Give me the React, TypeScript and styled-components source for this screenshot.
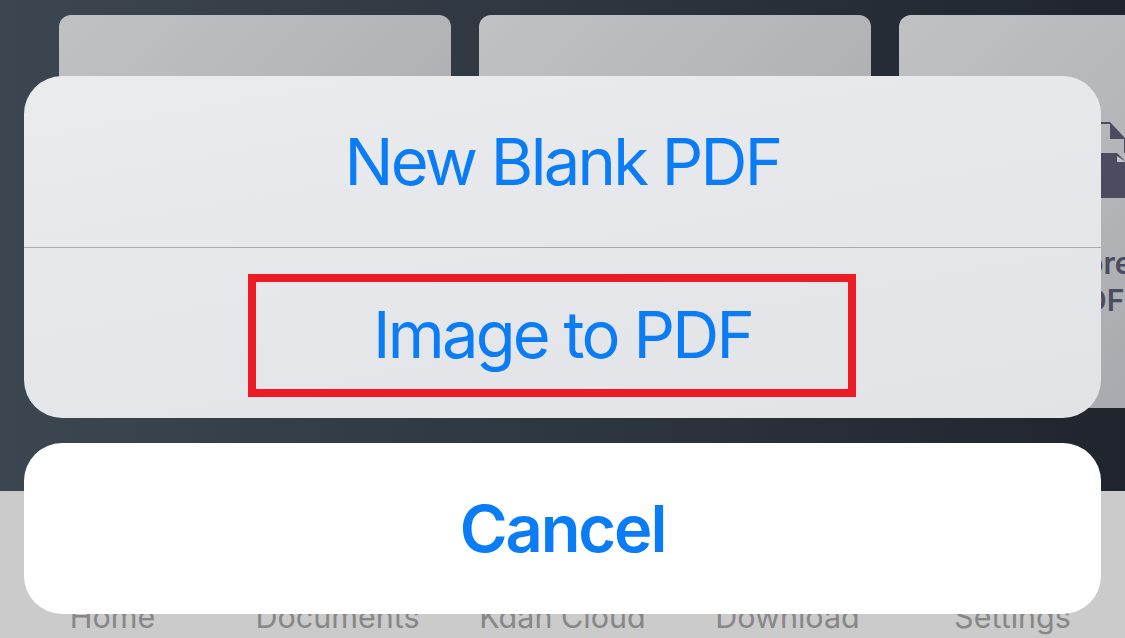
import React, { FunctionComponent } from 'react';
import styled, { createGlobalStyle } from 'styled-components';

const GlobalStyle = createGlobalStyle`
  html, body {
    margin: 0;
    padding: 0;
    background: #21262e;
  }
`;

const Screen = styled("div")`
  position: relative;
  width: 1125px;
  height: 638px;
  overflow: hidden;
  display: flex;
  flex-direction: column;
  font-family: Inter, "Liberation Sans", sans-serif;
  background: linear-gradient(90deg, #3c4651 0%, #2e3640 50%, #20252d 100%);
`;

const CardRow = styled("div")`
  flex: 1;
  display: flex;
  gap: 28px;
  padding: 15px 0 0 59px;
`;

const Card = styled("div")`
  flex: 0 0 392px;
  height: 393px;
  box-sizing: border-box;
  padding-top: 105px;
  border-radius: 12px;
  display: flex;
  flex-direction: column;
  align-items: center;
  background: linear-gradient(135deg, #c0c1c3 0%, #b2b4b7 50%, #a0a2a9 100%);
`;

const CardLabel = styled("div")`
  margin-top: 47px;
  color: #4b4b62;
  font-size: 30px;
  font-weight: 600;
  line-height: 37px;
  text-align: center;
`;

const TabBar = styled("div")`
  flex: 0 0 147px;
  box-sizing: border-box;
  display: grid;
  grid-template-columns: repeat(5, 1fr);
  align-items: end;
  padding-bottom: 3px;
  background: #cbcbcb;
`;

const TabLabel = styled("div")`
  color: #878787;
  font-size: 30.5px;
  line-height: 36px;
  text-align: center;
`;

const Overlay = styled("div")`
  position: absolute;
  left: 24px;
  right: 24px;
  bottom: 24px;
  display: flex;
  flex-direction: column;
  gap: 25px;
`;

const ActionGroup = styled("div")`
  border-radius: 38px;
  overflow: hidden;
  background: linear-gradient(170deg, #eaebed 0%, #e1e3e7 100%);
`;

const ActionRow = styled("div")<{ $divided?: boolean }>`
  height: ${(p) => (p.$divided ? "172px" : "170px")};
  box-sizing: border-box;
  display: flex;
  align-items: center;
  justify-content: center;
  color: #0a7cf5;
  font-size: 65px;
  letter-spacing: -2.7px;
  border-bottom: ${(p) => (p.$divided ? "1px solid #a9abae" : "none")};
`;

const Highlight = styled("div")`
  width: 608px;
  height: 123px;
  margin: 5px 22px 0 0;
  padding: 0 0 2px 22px;
  box-sizing: border-box;
  display: flex;
  align-items: center;
  justify-content: center;
  border: 8px solid #ed1c24;
`;

const CancelButton = styled("div")`
  height: 171px;
  display: flex;
  align-items: center;
  justify-content: center;
  border-radius: 38px;
  background: #ffffff;
  color: #0a7cf5;
  font-size: 65px;
  font-weight: 600;
  letter-spacing: -2.1px;
`;

const DocIcon: FunctionComponent = () => (
  <svg width="64" height="78" viewBox="0 0 64 78">
    <path
      fill="#4b4b62"
      d="M14 2 H47 L64 20 V33 H61 V19 H47 V4 H14 Z"
    />
    <path fill="#4b4b62" d="M4 33 H54 L64 43 V78 H4 Z" />
    <path fill="#c2c3c7" d="M54 36 V42 H63 Z" />
  </svg>
);

const tabs = ["Home", "Documents", "Kdan Cloud", "Download", "Settings"];

export default function App() {
  return (
    <Screen>
      <GlobalStyle />
      <CardRow>
        <Card />
        <Card />
        <Card>
          <DocIcon />
          <CardLabel>
            More
            <br />
            PDF
          </CardLabel>
        </Card>
      </CardRow>
      <TabBar>
        {tabs.map((tab) => (
          <TabLabel key={tab}>{tab}</TabLabel>
        ))}
      </TabBar>
      <Overlay>
        <ActionGroup>
          <ActionRow $divided>New Blank PDF</ActionRow>
          <ActionRow>
            <Highlight>Image to PDF</Highlight>
          </ActionRow>
        </ActionGroup>
        <CancelButton>Cancel</CancelButton>
      </Overlay>
    </Screen>
  );
}
